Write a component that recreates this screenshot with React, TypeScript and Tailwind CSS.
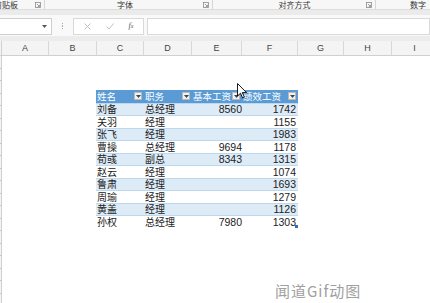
import React from "react";

const cols = [
  { l: "A", w: "w-[47px]" },
  { l: "B", w: "w-[48px]" },
  { l: "C", w: "w-[47px]" },
  { l: "D", w: "w-[48px]" },
  { l: "E", w: "w-[50px]" },
  { l: "F", w: "w-[56px]" },
  { l: "G", w: "w-[46px]" },
  { l: "H", w: "w-[48px]" },
  { l: "I", w: "w-[46px]" },
];

const rows: [string, string, string, string][] = [
  ["刘备", "总经理", "8560", "1742"],
  ["关羽", "经理", "", "1155"],
  ["张飞", "经理", "", "1983"],
  ["曹操", "总经理", "9694", "1178"],
  ["荀彧", "副总", "8343", "1315"],
  ["赵云", "经理", "", "1074"],
  ["鲁肃", "经理", "", "1693"],
  ["周瑜", "经理", "", "1279"],
  ["黄盖", "经理", "", "1126"],
  ["孙权", "总经理", "7980", "1303"],
];

const cjk = { fontFamily: '"Noto Sans CJK SC", "Noto Sans", sans-serif' };
const num = { fontFamily: '"Liberation Sans", sans-serif' };

function Launcher() {
  return (
    <svg width="6" height="6" viewBox="0 0 6 6" className="shrink-0">
      <rect x="0.5" y="0.5" width="5" height="5" fill="none" stroke="#8a8a8a" strokeWidth="0.8" />
      <path d="M2 2 L4.5 4.5 M4.5 2.8 V4.5 H2.8" stroke="#8a8a8a" strokeWidth="0.8" fill="none" />
    </svg>
  );
}

function Drop() {
  return (
    <div className="w-[8px] h-[8px] bg-[#f2f2f2] border border-[#b8b8b8] flex items-center justify-center shrink-0">
      <svg width="5" height="3" viewBox="0 0 5 3">
        <path d="M0 0 H5 L2.5 3 Z" fill="#444" />
      </svg>
    </div>
  );
}

export default function App() {
  return (
    <div className="w-[430px] h-[303px] overflow-hidden bg-white relative select-none" style={cjk}>
      {/* ribbon group labels */}
      <div className="h-[9px] bg-[#f7f7f7] flex items-center text-[8px] leading-[9px] text-[#333] relative overflow-hidden">
        <div className="w-[44px] h-full flex items-center justify-between pr-[3px] overflow-hidden">
          <span className="ml-[-6px] whitespace-nowrap">剪贴板</span>
          <Launcher />
        </div>
        <div className="w-px h-full bg-[#d6d6d6]" />
        <div className="w-[167px] flex items-center pr-[3px]">
          <span className="flex-1 text-center pl-[2px]">字体</span>
          <Launcher />
        </div>
        <div className="w-px h-full bg-[#d6d6d6]" />
        <div className="w-[162px] flex items-center pr-[3px]">
          <span className="flex-1 text-center pl-[10px]">对齐方式</span>
          <Launcher />
        </div>
        <div className="w-px h-full bg-[#d6d6d6]" />
        <div className="flex-1 flex justify-end pr-[4px]">
          <span>数字</span>
        </div>
      </div>
      <div className="h-[6px] bg-[#ebebeb] border-t border-[#dcdcdc]" />
      {/* formula bar */}
      <div className="h-[21px] bg-[#f9f9f9] flex items-center pt-[1px]">
        <div className="ml-[-2px] w-[54px] h-[17px] bg-white border border-[#cfcfcf] flex items-center justify-end pr-[4px]">
          <svg width="5" height="3" viewBox="0 0 5 3">
            <path d="M0 0 H5 L2.5 3 Z" fill="#555" />
          </svg>
        </div>
        <div className="w-[21px] flex flex-col items-center justify-center gap-[1px]">
          <div className="w-[1.5px] h-[1.5px] bg-[#aaa]" />
          <div className="w-[1.5px] h-[1.5px] bg-[#aaa]" />
          <div className="w-[1.5px] h-[1.5px] bg-[#aaa]" />
        </div>
        <div className="w-[71px] h-[17px] bg-white border border-[#d9d9d9] flex items-center justify-around px-[2px] text-[#b0b0b0]">
          <svg width="7" height="7" viewBox="0 0 7 7">
            <path d="M0.5 0.5 L6.5 6.5 M6.5 0.5 L0.5 6.5" stroke="#b8b8b8" strokeWidth="0.9" />
          </svg>
          <svg width="8" height="7" viewBox="0 0 8 7">
            <path d="M0.5 3.5 L3 6 L7.5 0.5" stroke="#b8b8b8" strokeWidth="0.9" fill="none" />
          </svg>
          <span className="text-[8px] leading-none italic text-[#555]" style={{ fontFamily: '"Liberation Serif", serif' }}>
            f<span className="text-[6px]">x</span>
          </span>
        </div>
        <div className="ml-[3px] flex-1 h-[17px] bg-white border border-[#d9d9d9]" />
      </div>
      <div className="h-[5px] bg-[#ececec]" />
      {/* column headers */}
      <div className="h-[15px] bg-[#f4f4f4] border-b border-[#d0d0d0] flex text-[9px] leading-none text-[#444]" style={num}>
        <div className="w-[2px] shrink-0 border-r border-[#d0d0d0]" />
        {cols.map((c) => (
          <div key={c.l} className={`${c.w} shrink-0 flex items-center justify-center border-r border-[#d8d8d8]`}>
            {c.l}
          </div>
        ))}
      </div>
      {/* sheet */}
      <div className="flex h-[247px]">
        <div className="w-[2px] shrink-0 border-r border-[#d0d0d0] bg-[#f4f4f4] flex flex-col">
          {Array.from({ length: 20 }).map((_, i) => (
            <div key={i} className="h-[12.5px] shrink-0 border-b border-[#c8c8c8]" />
          ))}
        </div>
        <div className="pl-[94px] pt-[34px]">
          <div className="w-[202px] relative">
            <div className="flex h-[12.5px] bg-[#5b9bd5] text-white text-[9.5px] leading-[12px]">
              {["姓名", "职务", "基本工资", "绩效工资"].map((h, i) => (
                <div
                  key={h}
                  className={`${["w-[48px]", "w-[48px]", "w-[50px]", "w-[56px]"][i]} flex items-center justify-between gap-[1px] pl-[1px] pr-[2px]`}
                >
                  <span className="whitespace-nowrap">{h}</span>
                  <Drop />
                </div>
              ))}
            </div>
            {rows.map((r, idx) => (
              <div
                key={r[0]}
                className={`flex h-[12.5px] text-[10px] leading-[12px] text-[#222] border-t border-[#bdd7ee] ${
                  idx % 2 === 0 ? "bg-[#ddebf7]" : "bg-white"
                }`}
              >
                <div className="w-[48px] flex items-center pl-[1px] whitespace-nowrap">{r[0]}</div>
                <div className="w-[48px] flex items-center pl-[1px] whitespace-nowrap">{r[1]}</div>
                <div className="w-[50px] flex items-center justify-end text-[10.5px]" style={num}>
                  {r[2]}
                </div>
                <div className="w-[56px] flex items-center justify-end pr-[2px] text-[10.5px]" style={num}>
                  {r[3]}
                </div>
              </div>
            ))}
            <div className="absolute right-0 bottom-0 w-[3px] h-[3px] bg-[#2f6fb6]" />
          </div>
        </div>
      </div>
      {/* cursor */}
      <svg className="absolute left-[237px] top-[83px]" width="11" height="17" viewBox="0 0 11 17">
        <path d="M0.5 0.5 L0.5 13 L3.5 10.2 L5.6 15 L7.4 14.2 L5.3 9.6 L9.5 9.6 Z" fill="#fff" stroke="#000" strokeWidth="0.9" strokeLinejoin="round" />
      </svg>
      {/* watermark */}
      <div
        className="absolute left-[275px] top-[283px] text-[15px] leading-none text-[#a0a0a0] tracking-[1px] whitespace-nowrap"
        style={{ textShadow: "1px 1px 0 #fff, -1px -1px 0 #fff, 1px -1px 0 #fff, -1px 1px 0 #fff" }}
      >
        闻道Gif动图
      </div>
    </div>
  );
}
